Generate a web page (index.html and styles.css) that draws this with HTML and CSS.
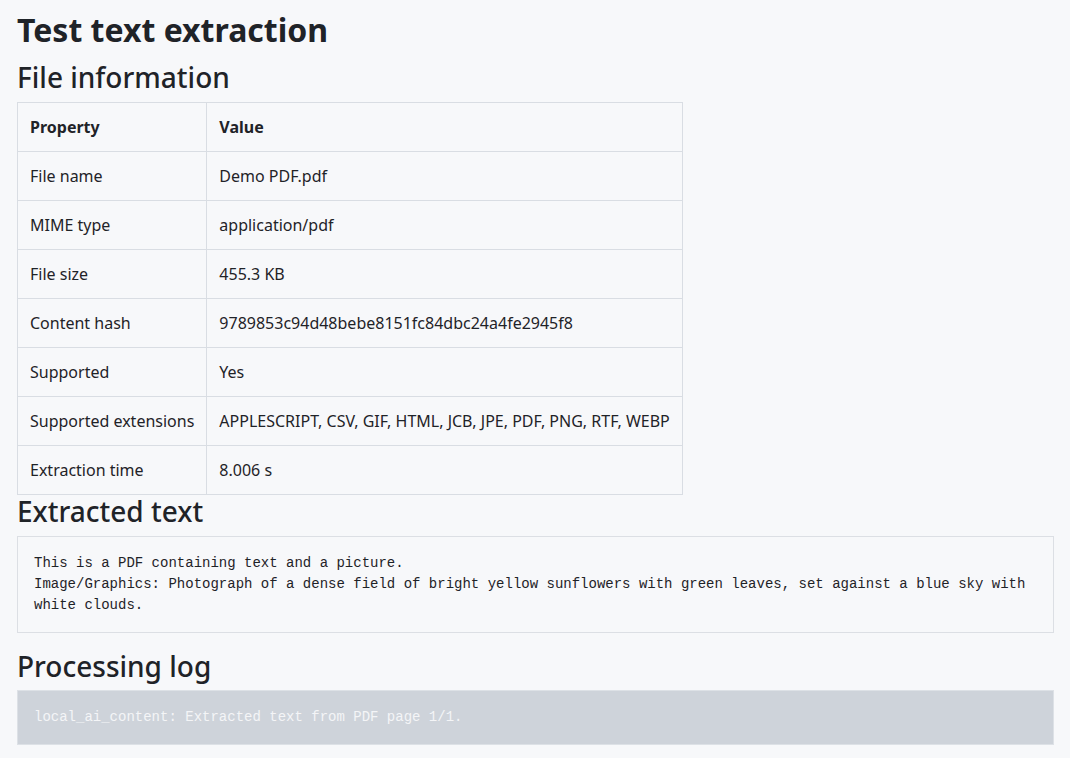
FILE: index.html
```html
<!DOCTYPE html>
<html lang="en">
<head>
    <meta charset="UTF-8">
    <meta name="viewport" content="width=device-width, initial-scale=1.0">
    <title>Test text extraction</title>
    <link rel="stylesheet" href="styles.css">
</head>
<body>

    <h1>Test text extraction</h1>

    <!-- File details -->
    <h2>File information</h2>
    <table class="info-table">
        <thead>
            <tr>
                <th>Property</th>
                <th>Value</th>
            </tr>
        </thead>
        <tbody>
            <tr><td>File name</td><td>Demo PDF.pdf</td></tr>
            <tr><td>MIME type</td><td>application/pdf</td></tr>
            <tr><td>File size</td><td>455.3 KB</td></tr>
            <tr><td>Content hash</td><td>9789853c94d48bebe8151fc84dbc24a4fe2945f8</td></tr>
            <tr><td>Supported</td><td>Yes</td></tr>
            <tr><td>Supported extensions</td><td>APPLESCRIPT, CSV, GIF, HTML, JCB, JPE, PDF, PNG, RTF, WEBP</td></tr>
            <tr><td>Extraction time</td><td>8.006 s</td></tr>
        </tbody>
    </table>

    <!-- Result -->
    <h2>Extracted text</h2>
    <pre class="text-output">This is a PDF containing text and a picture.
Image/Graphics: Photograph of a dense field of bright yellow sunflowers with green leaves, set against a blue sky with white clouds.</pre>

    <!-- Log -->
    <h2>Processing log</h2>
    <pre class="log-output">local_ai_content: Extracted text from PDF page 1/1.</pre>

</body>
</html>
```

FILE: styles.css
```css
/* Page */
body {
    font-family: "Noto Sans", "Open Sans", sans-serif;
    font-size: 16px;
    line-height: 1.5;
    margin: 0;
    padding: 11px 16px 0 17px;
    background-color: #f7f8fa;
    color: #1f2328;
}

/* Headings */
h1 {
    font-size: 32px;
    font-weight: 700;
    line-height: 1.2;
    margin: 0 0 12px 0;
}

h2 {
    font-size: 28px;
    font-weight: 500;
    line-height: 1.2;
    margin: 0 0 7px 0;
}

/* File information table */
.info-table {
    border-collapse: collapse;
    margin: 0;
}

.info-table th,
.info-table td {
    border: 1px solid #d9dde3;
    padding: 12px 12px;
    text-align: left;
    vertical-align: middle;
}

.info-table th {
    font-weight: 700;
}

/* Text blocks */
.text-output,
.log-output {
    font-family: "Liberation Mono", "DejaVu Sans Mono", monospace;
    font-size: 14px;
    line-height: 1.5;
    margin: 0 0 17px 0;
    padding: 16px;
    white-space: pre-wrap;
    word-wrap: break-word;
}

.text-output {
    background-color: #f7f8fa;
    border: 1px solid #dcdfe4;
    color: #1f2328;
}

.log-output {
    background-color: #ced3da;
    border: 1px solid #dde1e6;
    color: #f4f5f7;
}
```
